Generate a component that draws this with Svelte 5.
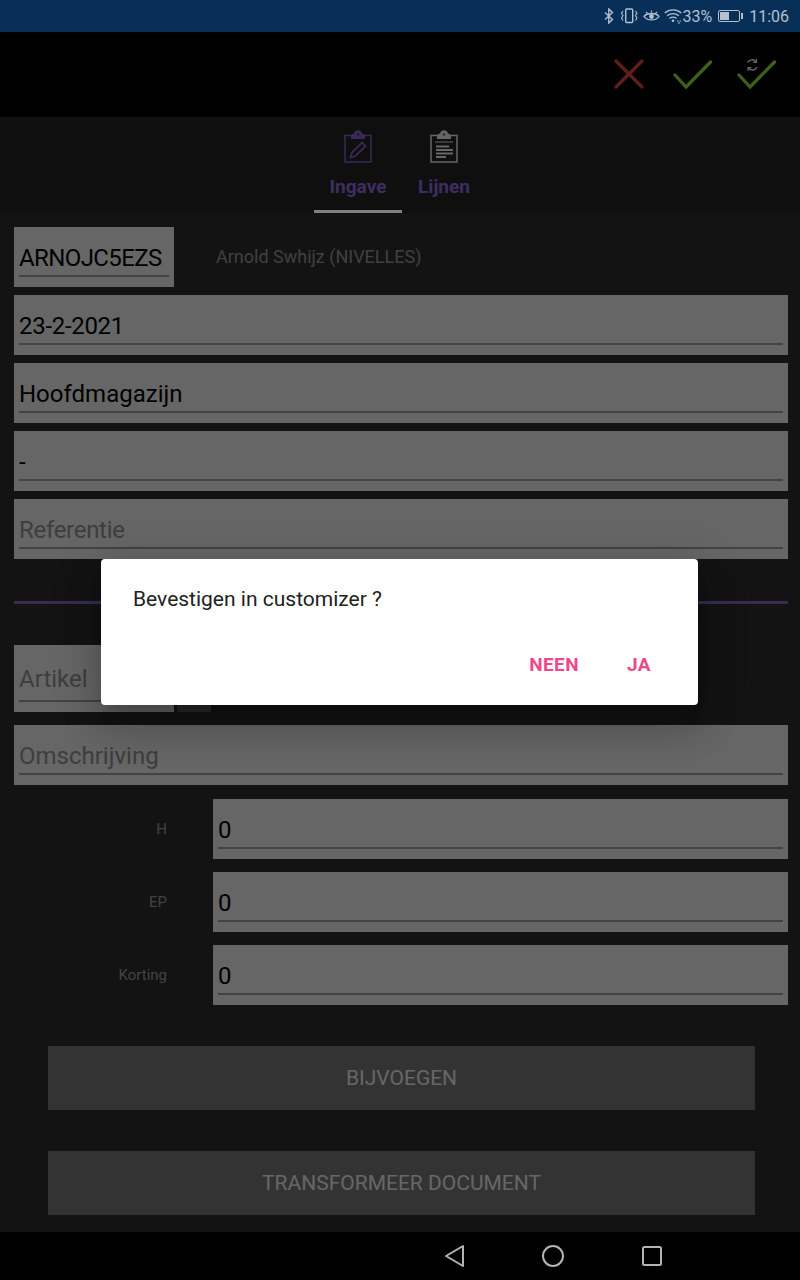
<script lang="ts">
  // Scherm "Ingave" met de bevestigingsdialoog open
  const fields = [
    { value: "23-2-2021", tight: true },
    { value: "Hoofdmagazijn", tight: false },
    { value: "-", tight: false }
  ];
  const amounts = [
    { label: "H", value: "0" },
    { label: "EP", value: "0" },
    { label: "Korting", value: "0" }
  ];
</script>

<div class="screen">
  <header class="statusbar">
    <!-- bluetooth -->
    <svg class="st" width="12" height="16" viewBox="0 0 12 16" aria-hidden="true">
      <path d="M2 4.500l7.500 7-3.700 3.500V1l3.700 3.500L2 11.500" fill="none" stroke="currentColor" stroke-width="1.400" />
    </svg>
    <!-- vibrate -->
    <svg class="st" width="18" height="16" viewBox="0 0 18 16" aria-hidden="true">
      <rect x="5.700" y="1" width="7" height="13.500" rx="1" fill="none" stroke="currentColor" stroke-width="1.400" />
      <path d="M3 3L1.500 5.200 3 7.500 1.500 10 3 12.500M15.500 3L17 5.200 15.500 7.500 17 10 15.500 12.500" fill="none" stroke="currentColor" stroke-width="1.100" />
    </svg>
    <!-- eye -->
    <svg class="st eye" width="17" height="16" viewBox="0 0 17 16" aria-hidden="true">
      <path d="M1 8.500C4 4.500 13 4.500 16 8.500 13 13 4 13 1 8.500z" fill="none" stroke="currentColor" stroke-width="1.300" />
      <circle cx="8.500" cy="8.500" r="2.400" fill="currentColor" />
      <path d="M3 4l1.500 1.500M8.500 2.500v2M14 4l-1.500 1.500" stroke="currentColor" stroke-width="1.100" />
    </svg>
    <!-- wifi -->
    <svg class="wifi" width="18" height="16" viewBox="0 0 18 16" aria-hidden="true">
      <path d="M.8 5C5.500 .8 12.500 .8 17.200 5M3.200 7.800C6.500 5 11.500 5 14.800 7.800M5.500 10.500C7.500 9 10.500 9 12.500 10.500" fill="none" stroke="currentColor" stroke-width="1.300" />
      <circle cx="9" cy="12.800" r="1.300" fill="currentColor" />
      <path d="M13 13h1.500M15.500 13H17M14 15h2" stroke="currentColor" stroke-width="1" />
    </svg>
    <span>33%</span>
    <span class="battery"><span class="level"></span></span>
    <span class="clock">11:06</span>
  </header>

  <div class="stage">
    <div class="toolbar">
      <svg class="cancel" width="30" height="30" viewBox="0 0 30 30" aria-hidden="true">
        <path d="M2 2l26 26M28 2L2 28" stroke="#f04c3c" stroke-width="3.300" stroke-linecap="round" />
      </svg>
      <svg width="40" height="30" viewBox="0 0 40 30" aria-hidden="true">
        <path d="M2 16l11 12L37.500 3" fill="none" stroke="#a4ec48" stroke-width="3.300" stroke-linecap="round" />
      </svg>
      <svg width="40" height="30" viewBox="0 0 40 30" aria-hidden="true">
        <path d="M2 16l11 12L37.500 3" fill="none" stroke="#a4ec48" stroke-width="3.300" stroke-linecap="round" />
        <path d="M10.500 3.500A5 5 0 0 1 19 3M20 8A5 5 0 0 1 11.500 9" fill="none" stroke="#fff" stroke-width="1.500" />
        <path d="M19.500 0v3.500H16M11 12V8.500h3.500" fill="none" stroke="#fff" stroke-width="1.200" />
      </svg>
    </div>

    <nav class="tabs">
      <div class="tab active">
        <svg width="30" height="34" viewBox="0 0 30 34" aria-hidden="true">
          <path d="M8 5.500H2V32h26V5.500h-6" fill="none" stroke="#8b68dc" stroke-width="1.500" />
          <path d="M8 9V5.500c0-1 1-1.500 3-2 .8-4.500 7.200-4.500 8 0 2 .5 3 1 3 2V9z" fill="#8b68dc" />
          <circle cx="15" cy="4.500" r="1" fill="#262626" />
          <path d="M7.500 27.500l1.500-5L19 12.500l3.500 3.500-10 10z" fill="none" stroke="#8b68dc" stroke-width="1.800" />
        </svg>
        <span>Ingave</span>
      </div>
      <div class="tab second">
        <svg width="30" height="34" viewBox="0 0 30 34" aria-hidden="true">
          <path d="M8 5.500H2V32h26V5.500h-6" fill="none" stroke="#fff" stroke-width="1.500" />
          <path d="M8 9V5.500c0-1 1-1.500 3-2 .8-4.500 7.200-4.500 8 0 2 .5 3 1 3 2V9z" fill="#fff" />
          <circle cx="15" cy="4.500" r="1" fill="#262626" />
          <path d="M6 12h18" stroke="#fff" stroke-width="1" />
          <path d="M7 16.500h13M7 20h17M7 23.500h17M7 27h10" stroke="#fff" stroke-width="2" />
        </svg>
        <span>Lijnen</span>
      </div>
    </nav>

    <section class="content">
      <div class="customer">
        <label class="field short"><span class="value code">ARNOJC5EZS</span></label>
        <span class="customer-name">Arnold Swhijz (NIVELLES)</span>
      </div>

      {#each fields as f}
        <label class="field"><span class="value" class:tight={f.tight}>{f.value}</span></label>
      {/each}
      <label class="field"><span class="value hint tight">Referentie</span></label>

      <hr class="divider" />

      <div class="article">
        <label class="field short tall"><span class="value hint">Artikel</span></label>
        <span class="picker"></span>
      </div>
      <label class="field description"><span class="value hint">Omschrijving</span></label>

      <div class="amounts">
        {#each amounts as row}
          <div class="amount">
            <span class="amount-label">{row.label}</span>
            <label class="field"><span class="value">{row.value}</span></label>
          </div>
        {/each}
      </div>

      <div class="actions">
        <button type="button">BIJVOEGEN</button>
        <button type="button">TRANSFORMEER DOCUMENT</button>
      </div>
    </section>

    <div class="scrim">
      <div class="dialog" role="dialog">
        <p>Bevestigen in customizer ?</p>
        <div class="dialog-actions">
          <button type="button">NEEN</button>
          <button type="button">JA</button>
        </div>
      </div>
    </div>
  </div>

  <footer class="navbar">
    <svg width="22" height="24" viewBox="0 0 22 24" aria-hidden="true">
      <path d="M20 2v20L3 12z" fill="none" stroke="#b4b4b4" stroke-width="2" stroke-linejoin="round" />
    </svg>
    <svg width="24" height="24" viewBox="0 0 24 24" aria-hidden="true">
      <circle cx="12" cy="12" r="10" fill="none" stroke="#b4b4b4" stroke-width="2" />
    </svg>
    <svg width="22" height="22" viewBox="0 0 22 22" aria-hidden="true">
      <rect x="2" y="2" width="18" height="18" rx="1.500" fill="none" stroke="#b4b4b4" stroke-width="2" />
    </svg>
  </footer>
</div>

<style>
  :global(body) {
    margin: 0;
    background: #000;
    font-family: Roboto, "Liberation Sans", sans-serif;
  }

  .screen {
    width: 800px;
    height: 1280px;
    display: flex;
    flex-direction: column;
    overflow: hidden;
  }

  /* Status bar */
  .statusbar {
    height: 32px;
    flex: none;
    box-sizing: border-box;
    padding-right: 11px;
    display: flex;
    align-items: center;
    justify-content: flex-end;
    background: #072f57;
    color: #b4c1cf;
    font-size: 16px;
  }
  .st {
    margin-right: 5px;
  }
  .st.eye {
    margin-right: 4px;
  }
  .battery {
    position: relative;
    box-sizing: border-box;
    width: 22px;
    height: 12px;
    margin: 0 3px 0 6px;
    padding: 1px;
    border: 1px solid #b4c1cf;
    border-radius: 2px;
  }
  .battery::after {
    content: "";
    position: absolute;
    right: -4px;
    top: 2px;
    width: 2px;
    height: 6px;
    background: #b4c1cf;
  }
  .level {
    display: block;
    width: 9px;
    height: 100%;
    background: #b4c1cf;
  }
  .clock {
    margin-left: 6px;
  }

  .stage {
    position: relative;
    flex: 1;
    min-height: 0;
    overflow: hidden;
    display: flex;
    flex-direction: column;
    background: #303030;
  }

  /* Toolbar */
  .toolbar {
    height: 85px;
    flex: none;
    box-sizing: border-box;
    padding: 27px 23px 0 0;
    display: flex;
    justify-content: flex-end;
    gap: 24px;
    background: #000;
  }
  .toolbar svg {
    display: block;
  }
  .cancel {
    margin-right: 5px;
  }

  /* Tabs */
  .tabs {
    height: 96px;
    flex: none;
    display: flex;
    justify-content: center;
    background: #262626;
    box-sizing: border-box;
  }
  .tab {
    width: 88px;
    box-sizing: border-box;
    padding-top: 13px;
    display: flex;
    flex-direction: column;
    align-items: center;
    font-size: 19px;
    line-height: 24px;
    font-weight: 700;
  }
  .tab.second {
    width: 84px;
  }
  .tab svg {
    display: block;
    margin-bottom: 11px;
  }
  .tab span {
    color: #9a74f0;
  }
  .tab.active {
    position: relative;
  }
  /* de indicator blijft lichter dan de scrim toelaat */
  .tab.active::after {
    content: "";
    position: absolute;
    z-index: 1;
    left: 0;
    right: 0;
    bottom: 0;
    height: 3px;
    background: #808080;
  }

  /* Form */
  .content {
    padding: 14px 12px 0 14px;
    display: flex;
    flex-direction: column;
    gap: 8px;
  }
  .customer,
  .article {
    display: flex;
    align-items: flex-start;
  }
  .customer-name {
    margin: 19px 0 0 42px;
    font-size: 18px;
    color: #a0a0a0;
  }

  .field {
    display: block;
    height: 60px;
    box-sizing: border-box;
    padding: 0 5px;
    background: #fff;
  }
  .amount .field {
    flex: 1;
  }
  .field.short {
    flex: none;
    width: 160px;
  }
  .field.tall {
    height: 67px;
  }
  .value {
    display: block;
    box-sizing: border-box;
    height: 50px;
    padding-top: 16px;
    border-bottom: 2px solid #a8a8a8;
    font-size: 24px;
    line-height: 30px;
    color: #000;
    white-space: nowrap;
  }
  .tall .value {
    height: 57px;
    padding-top: 19px;
  }
  .hint {
    color: #9c9c9c;
  }
  .code {
    letter-spacing: -0.6px;
  }
  .tight {
    letter-spacing: -0.3px;
  }

  .divider {
    width: 100%;
    height: 3px;
    margin: 34px 0 33px;
    border: 0;
    background: #8e6bd6;
  }

  .article {
    gap: 3px;
  }
  .picker {
    width: 34px;
    height: 67px;
    background: #666;
  }
  .description {
    margin-top: 5px;
  }

  .amounts {
    margin-top: 6px;
    display: flex;
    flex-direction: column;
    gap: 13px;
  }
  .amount {
    display: flex;
    align-items: center;
  }
  .amount-label {
    width: 153px;
    margin-right: 46px;
    text-align: right;
    font-size: 15px;
    color: #a6a6a6;
  }

  .actions {
    margin: 33px 33px 0 34px;
    display: flex;
    flex-direction: column;
    gap: 41px;
  }
  .actions button {
    height: 64px;
    border: 0;
    background: #7f7f7f;
    font: inherit;
    font-size: 21px;
    color: #fff;
  }

  /* Dialog */
  .scrim {
    position: absolute;
    inset: 0;
    display: flex;
    align-items: center;
    justify-content: center;
    background: rgba(0, 0, 0, 0.6);
  }
  .dialog {
    width: 597px;
    height: 146px;
    margin-left: -1px;
    box-sizing: border-box;
    padding: 28px 47px 0 32px;
    border-radius: 4px;
    background: #fff;
    box-shadow: 0 11px 15px -7px rgba(0, 0, 0, 0.2), 0 24px 38px 3px rgba(0, 0, 0, 0.14), 0 9px 46px 8px rgba(0, 0, 0, 0.12);
  }
  .dialog p {
    margin: 0;
    font-size: 21px;
    line-height: 24px;
    color: #212121;
  }
  .dialog-actions {
    margin-top: 43px;
    display: flex;
    justify-content: flex-end;
    gap: 48px;
  }
  .dialog-actions button {
    padding: 0;
    border: 0;
    background: none;
    font: inherit;
    font-size: 19px;
    font-weight: 700;
    line-height: 22px;
    letter-spacing: 0.4px;
    color: #f0468a;
  }

  /* Android nav bar */
  .navbar {
    height: 48px;
    flex: none;
    display: flex;
    align-items: center;
    justify-content: flex-end;
    gap: 76px;
    padding-right: 137px;
    background: #000;
  }
  .navbar svg {
    display: block;
  }
</style>
